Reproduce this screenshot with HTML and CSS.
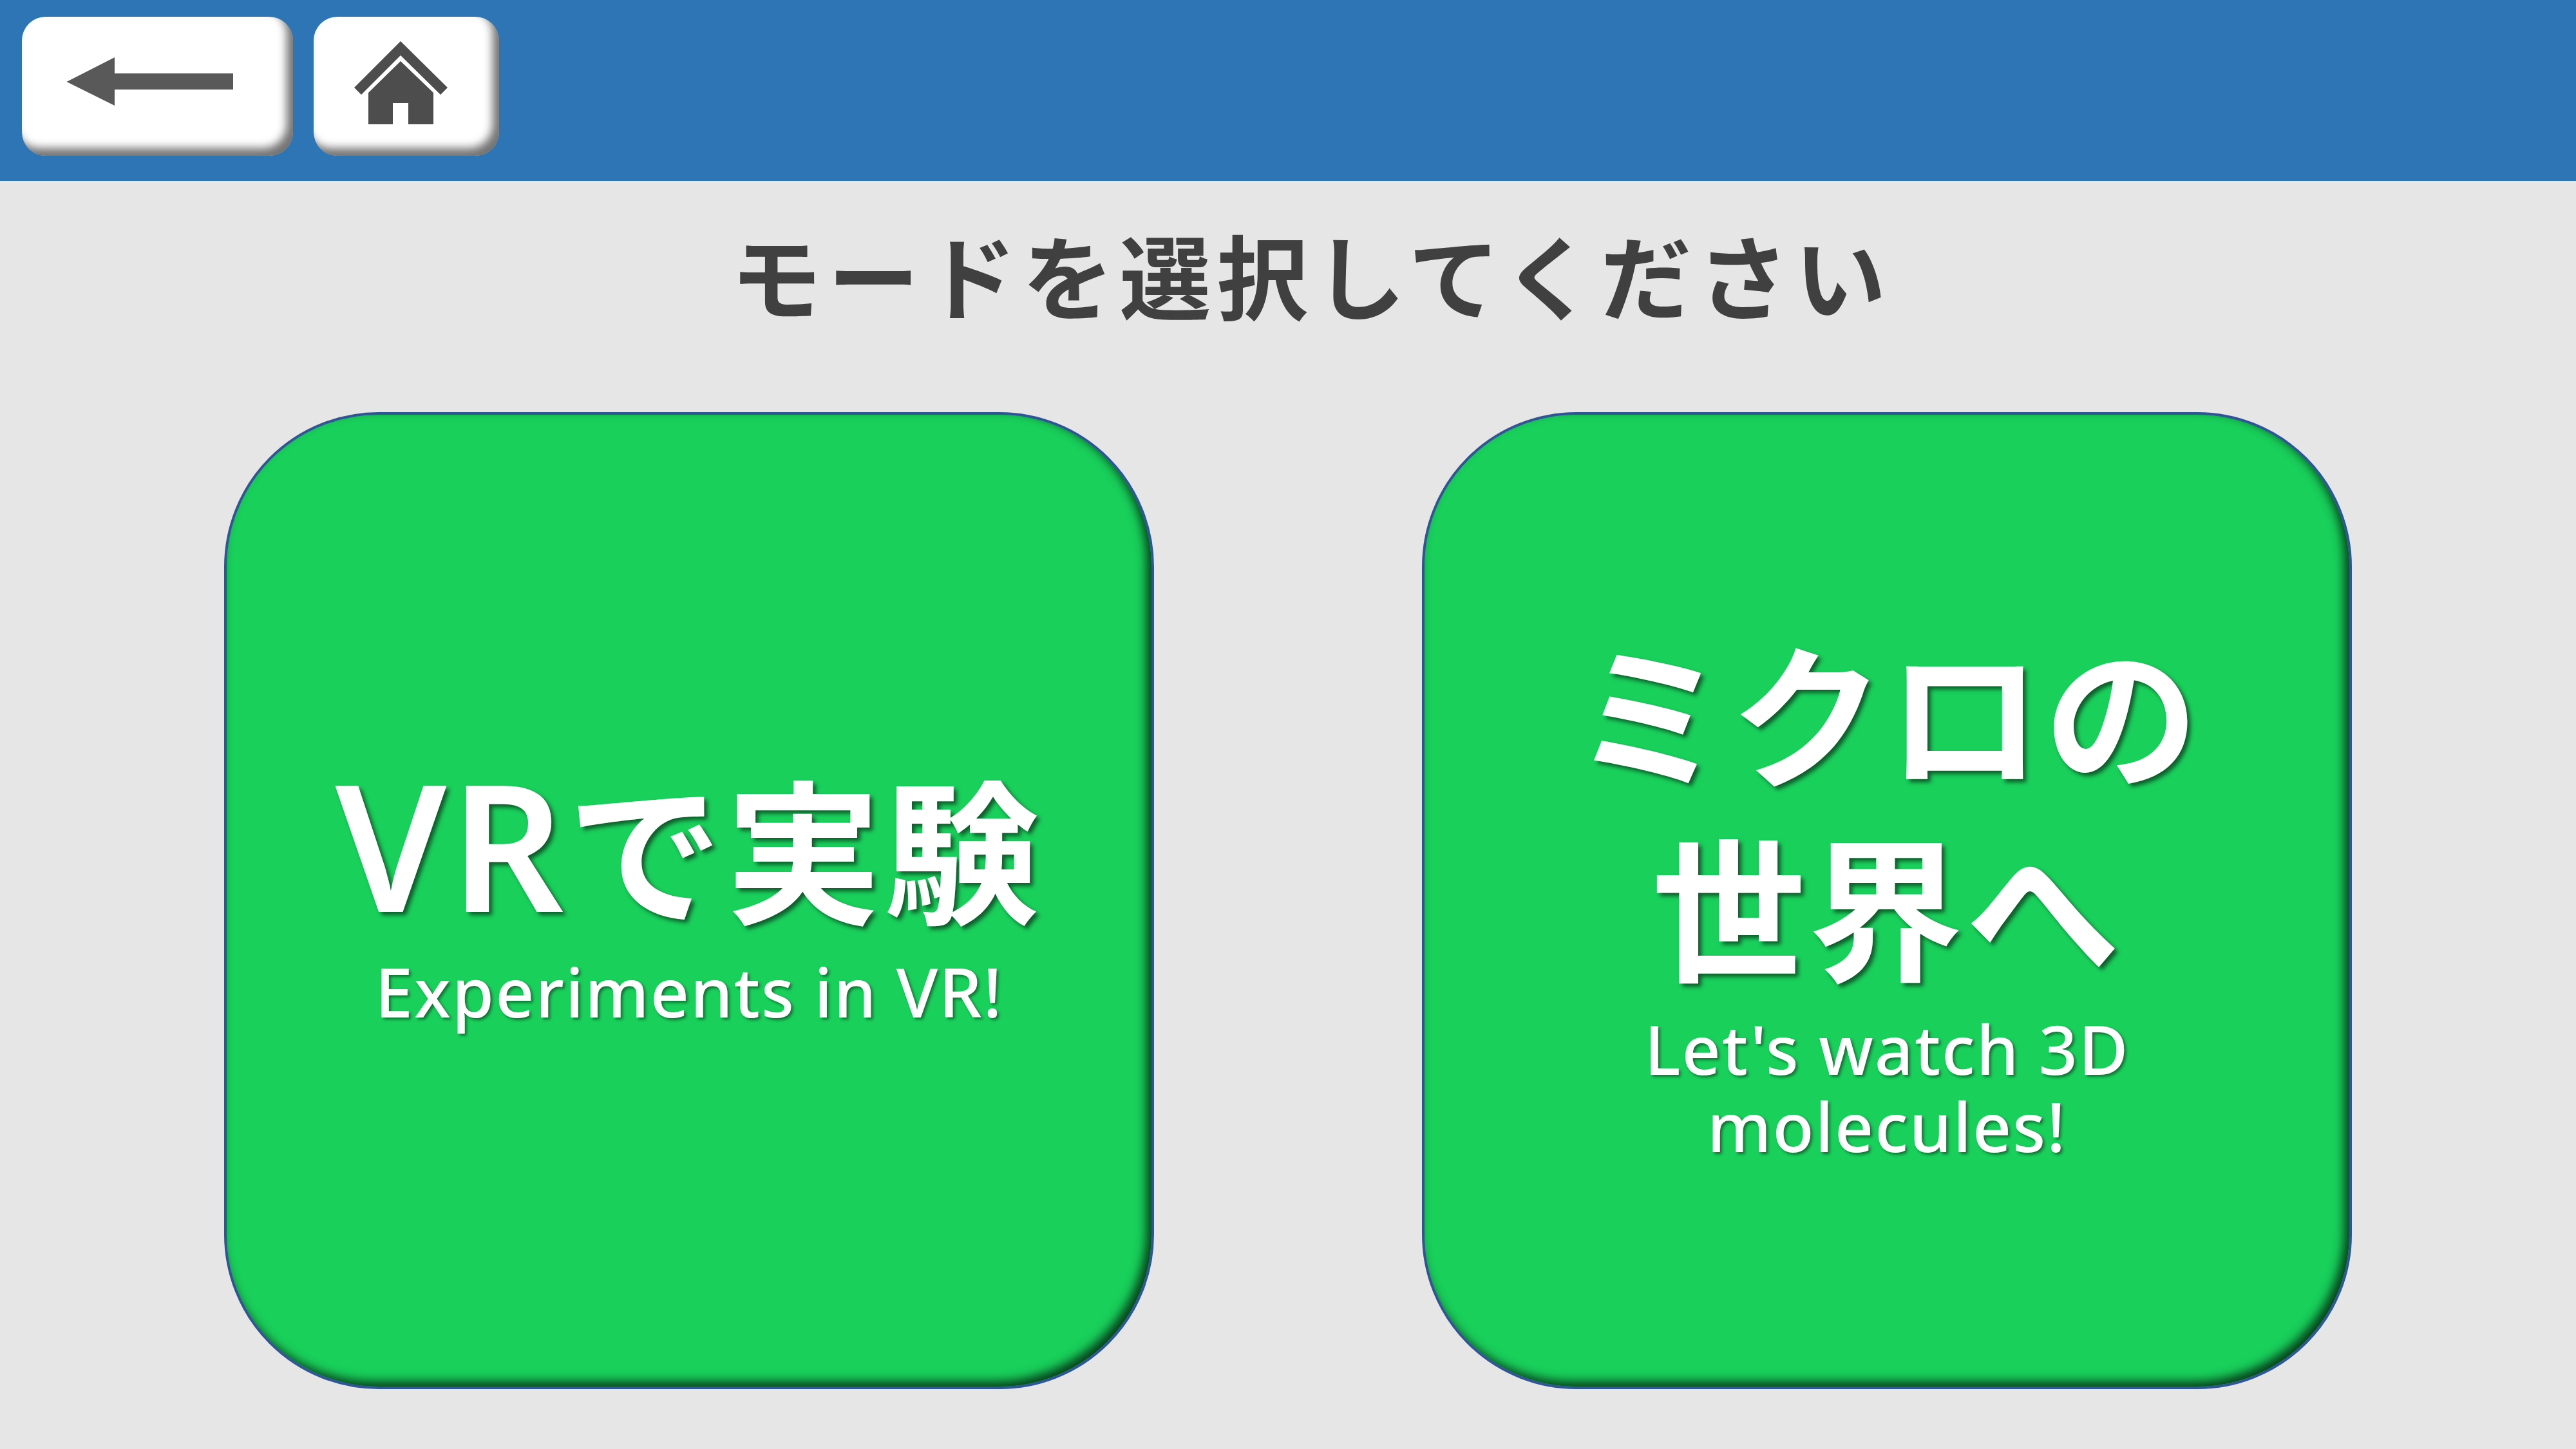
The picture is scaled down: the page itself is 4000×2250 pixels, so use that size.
FILE: index.html
```html
<!DOCTYPE html>
<html lang="ja">
  <head>
    <meta charset="UTF-8" />
    <title>モードを選択してください</title>
    <link rel="stylesheet" href="styles.css">
  </head>
  <body>
    <header class="top-bar">
      <button class="nav-btn back-btn" aria-label="戻る">
        <svg viewBox="0 0 421 216">
          <polygon class="arrow" points="69.5,101 144,63 144,88 328,88 328,113 144,113 144,138" />
        </svg>
      </button>
      <button class="nav-btn home-btn" aria-label="ホーム">
        <svg viewBox="0 0 288 216">
          <polygon class="house" points="135,38 208,110 197,121 135,60 74,121 63,110" />
          <polygon class="house" points="135,69 186,118 186,167 147,167 147,134 123,134 123,167 85,167 85,118" />
        </svg>
      </button>
    </header>

    <main class="content">
      <h1 class="title">モードを選択してください</h1>
      <div class="cards">
        <a class="card">
          <div class="card-title"><span class="latin">VR</span>で実験</div>
          <div class="card-sub">Experiments in VR!</div>
        </a>
        <a class="card">
          <div class="card-title wide">ミクロの<br>世界へ</div>
          <div class="card-sub">Let's watch 3D<br>molecules!</div>
        </a>
      </div>
    </main>
  </body>
</html>
```

FILE: styles.css
```css
* {
  box-sizing: border-box;
}
body {
  margin: 0;
  width: 4000px;
  height: 2250px;
  overflow: hidden;
  background-color: #e6e6e6;
  font-family: "Noto Sans CJK JP", "Noto Sans", sans-serif;
}
.top-bar {
  height: 281px;
  display: flex;
  gap: 32px;
  padding: 26px 34px;
  background-color: #2e75b6;
}
.nav-btn {
  height: 216px;
  padding: 0;
  border: none;
  background: white;
  border-radius: 37px;
  box-shadow: inset -10px -12px 14px rgba(0, 0, 0, 0.55);
}
.nav-btn svg {
  display: block;
  width: 100%;
  height: 100%;
}
.back-btn {
  width: 421px;
}
.home-btn {
  width: 288px;
}
.arrow {
  fill: #595959;
}
.house {
  fill: #4d4d4d;
}
.content {
  display: flex;
  flex-direction: column;
  align-items: center;
}
.title {
  height: 359px;
  margin: 0 0 0 72px;
  padding-top: 58px;
  font-size: 142px;
  line-height: 170px;
  font-weight: 700;
  letter-spacing: 9px;
  color: #404040;
}
.cards {
  display: flex;
  gap: 416px;
}
.card {
  width: 1444px;
  height: 1517px;
  padding-bottom: 38px;
  display: flex;
  flex-direction: column;
  justify-content: center;
  align-items: center;
  text-align: center;
  color: white;
  background-color: #19d05b;
  border: 4px solid #2f5597;
  border-radius: 240px;
  box-shadow: inset -8px -8px 16px rgba(0, 0, 0, 0.7);
}
.card-title {
  margin-bottom: 18px;
  font-size: 240px;
  line-height: 300px;
  font-weight: 700;
  letter-spacing: 6px;
  text-shadow: 5px 5px 6px rgba(0, 0, 0, 0.55);
}
.card-title .latin {
  font-family: "Noto Sans", sans-serif;
  font-size: 274px;
  font-weight: 600;
}
.card-title.wide {
  letter-spacing: 4px;
}
.card-sub {
  font-family: "Noto Sans", sans-serif;
  font-size: 105px;
  line-height: 120px;
  font-weight: 500;
  letter-spacing: 2px;
  text-shadow: 3px 3px 4px rgba(0, 0, 0, 0.45);
}
```
